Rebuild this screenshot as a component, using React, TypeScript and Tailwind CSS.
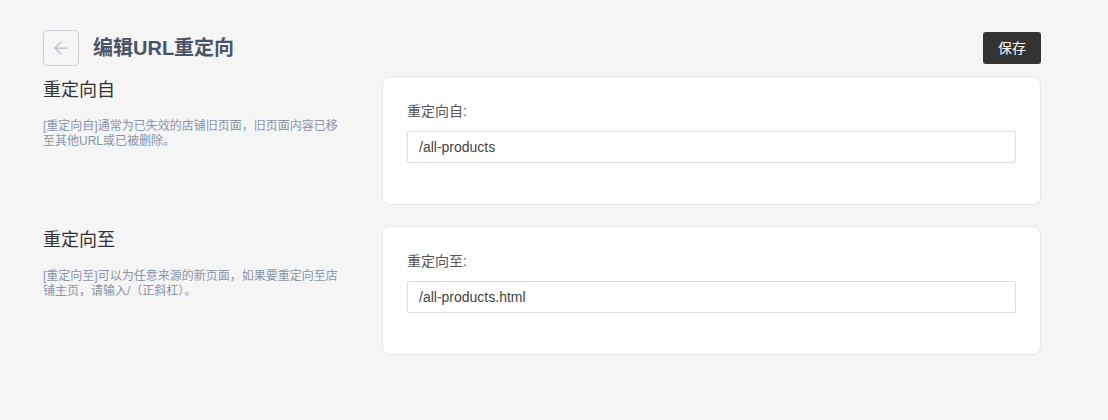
import { ArrowLeft } from 'lucide-react'

const font = { fontFamily: '"Liberation Sans", Arial, "Noto Sans CJK SC", sans-serif' }

type Section = {
  title: string
  desc: string
  label: string
  value: string
}

const sections: Section[] = [
  {
    title: '重定向自',
    desc: '[重定向自]通常为已失效的店铺旧页面，旧页面内容已移至其他URL或已被删除。',
    label: '重定向自:',
    value: '/all-products'
  },
  {
    title: '重定向至',
    desc: '[重定向至]可以为任意来源的新页面，如果要重定向至店铺主页，请输入/（正斜杠）。',
    label: '重定向至:',
    value: '/all-products.html'
  }
]

export default function App() {
  return (
    <div className="min-h-[420px] w-full bg-[#f5f5f5]" style={font}>
      <div className="ml-[43px] w-[998px] pt-[30px]">
        {/* Header */}
        <div className="flex h-9 items-center justify-between">
          <div className="flex items-center gap-[14px]">
            <button className="flex h-9 w-9 items-center justify-center rounded border border-[#cdd0d6] text-[#b4b9c4]">
              <ArrowLeft className="h-5 w-5" strokeWidth={1.5} />
            </button>
            <h1 className="text-[20px] font-bold text-[#4a5368]">编辑URL重定向</h1>
          </div>
          <button className="h-8 w-[58px] rounded-[3px] bg-[#333333] text-[14px] text-white">保存</button>
        </div>

        {/* Sections */}
        <div className="mt-[10px] flex flex-col gap-[21px]">
          {sections.map((s) => (
            <div key={s.title} className="flex">
              <div className="w-[299px] shrink-0">
                <h2 className="pt-[1px] text-[18px] leading-[26px] text-[#333333]">{s.title}</h2>
                <p className="mt-4 text-[12px] leading-[15px] text-[#8a94a6]">{s.desc}</p>
              </div>
              <div className="ml-[40px] flex-1 rounded-lg border border-[#e6e6eb] bg-white px-6 pt-6 pb-[41px]">
                <label className="block text-[14px] leading-5 text-[#555555]">{s.label}</label>
                <input
                  readOnly
                  value={s.value}
                  className="mt-[10px] h-8 w-full rounded-[2px] border border-[#dcdde3] px-[11px] text-[14px] text-[#444444] outline-none"
                />
              </div>
            </div>
          ))}
        </div>
      </div>
    </div>
  )
}
